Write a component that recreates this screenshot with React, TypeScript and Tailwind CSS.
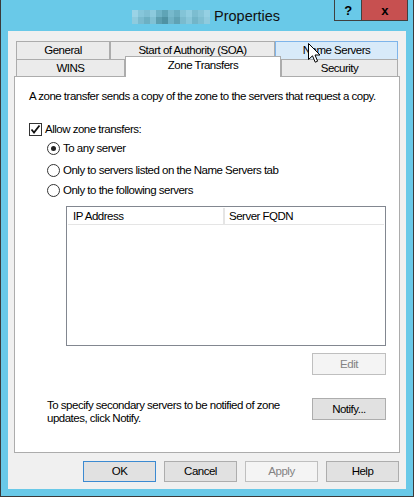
import React from "react";

const blur = [
  ["#9ad3e6", "#86c6da", "#7fbfd3", "#8ccadd", "#6fb3c6", "#5fa4b6", "#77b9cc", "#6aaec1", "#83c4d7", "#90cde0", "#7cbdd0", "#86c5d8", "#95d0e3"],
  ["#8ecbde", "#7abbcf", "#6cb0c3", "#80c1d4", "#5c9fb0", "#4f92a3", "#6fb2c5", "#5fa2b4", "#7abbce", "#88c7da", "#72b5c8", "#7ebfd2", "#8fcbde"],
];

function Tab({
  label,
  width,
  height,
  hover,
}: {
  label: string;
  width: string;
  height: string;
  hover?: boolean;
}) {
  return (
    <div
      className={`${width} ${height} flex items-center justify-center border border-b-0 ${
        hover ? "border-[#7eb4ea] bg-[#d8eaf9]" : "border-[#acacac] bg-[#ebebeb]"
      }`}
    >
      {label}
    </div>
  );
}

function Btn({
  label,
  className,
}: {
  label: string;
  className?: string;
}) {
  return (
    <div
      className={`flex h-[21px] w-[73px] items-center justify-center border ${
        className ?? "border-[#adadad] bg-[#e1e1e1]"
      }`}
    >
      {label}
    </div>
  );
}

function Radio({ checked, label }: { checked?: boolean; label: string }) {
  return (
    <div className="flex h-[15px] items-center">
      <div className="ml-[18px] flex h-[13px] w-[13px] items-center justify-center rounded-full border border-[#333] bg-white">
        {checked && <div className="h-[5px] w-[5px] rounded-full bg-[#222]" />}
      </div>
      <span className="ml-[3px]">{label}</span>
    </div>
  );
}

export default function App() {
  return (
    <div
      className="relative h-[497px] w-[414px] overflow-hidden border-x border-b border-[#3a3a3a] bg-[#69c9e8] text-[11.5px] leading-[15px] tracking-[-0.5px] text-black"
      style={{ fontFamily: '"Liberation Sans", Arial, sans-serif' }}
    >
      {/* title bar */}
      <div className="relative flex h-[31px] items-start">
        <div className="absolute left-[131px] top-[10px] grid grid-cols-[repeat(13,6px)] grid-rows-[repeat(2,7px)]">
          {blur.flat().map((c, i) => (
            <div key={i} style={{ backgroundColor: c }} />
          ))}
        </div>
        <div className="absolute left-[213px] top-[6px] text-[14.5px] leading-[20px] tracking-normal text-[#111]">
          Properties
        </div>
        <div className="ml-auto mr-[5px] flex h-[21px] border border-t-0 border-[#404040]">
          <div className="flex w-[27px] items-center justify-center border-r border-[#404040] text-[13px] font-bold">
            ?
          </div>
          <div className="flex w-[45px] items-center justify-center bg-[#c75050] text-[13px] font-bold">
            x
          </div>
        </div>
      </div>

      {/* body */}
      <div className="mx-[7px] flex h-[458px] flex-col bg-[#f0f0f0] pt-[10px]">
        <div className="ml-[8px] flex">
          <Tab label="General" width="w-[94px]" height="h-[18px]" />
          <Tab label="Start of Authority (SOA)" width="w-[165px]" height="h-[18px]" />
          <Tab label="Name Servers" width="w-[123px]" height="h-[18px]" hover />
        </div>
        <div className="relative z-10 ml-[8px] flex items-end">
          <Tab label="WINS" width="w-[109px]" height="h-[17px]" />
          <div className="-mb-px -mt-[3px] flex h-[21px] w-[156px] items-start justify-center border border-b-0 border-[#acacac] bg-white pt-[1px]">
            Zone Transfers
          </div>
          <Tab label="Security" width="w-[117px]" height="h-[17px]" />
        </div>

        <div className="ml-[6px] h-[377px] w-[386px] border border-[#acacac] bg-white pl-[14px] pt-[12px]">
          <div>A zone transfer sends a copy of the zone to the servers that request a copy.</div>

          <div className="mt-[18px] flex h-[15px] items-center">
            <div className="flex h-[13px] w-[13px] items-center justify-center border border-[#333] bg-white">
              <svg width="11" height="11" viewBox="0 0 11 11">
                <path d="M1.5 5.5 L4 8.5 L9.5 1.5" fill="none" stroke="#111" strokeWidth="1.8" />
              </svg>
            </div>
            <span className="ml-[3px]">Allow zone transfers:</span>
          </div>

          <div className="mt-[4px]">
            <Radio checked label="To any server" />
          </div>
          <div className="mt-[7px]">
            <Radio label="Only to servers listed on the Name Servers tab" />
          </div>
          <div className="mt-[5px]">
            <Radio label="Only to the following servers" />
          </div>

          <div className="ml-[37px] mt-[8px] h-[140px] w-[320px] border border-[#828790] p-px">
            <div className="flex h-[17px] border-b border-[#e5e5e5]">
              <div className="w-[157px] border-r-2 border-[#e5e5e5] pl-[5px] leading-[16px]">IP Address</div>
              <div className="pl-[4px] leading-[16px]">Server FQDN</div>
            </div>
          </div>

          <div className="ml-[283px] mt-[7px] flex h-[22px] w-[74px] items-center justify-center border border-[#bfbfbf] bg-[#f4f4f4] text-[#838383]">
            Edit
          </div>

          <div className="mt-[23px] flex items-start">
            <div className="ml-[18px] w-[250px] pt-[1px] leading-[13px]">
              To specify secondary servers to be notified of zone updates, click Notify.
            </div>
            <div className="ml-[15px] flex h-[22px] w-[74px] items-center justify-center border border-[#adadad] bg-[#e1e1e1]">
              Notify...
            </div>
          </div>
        </div>

        <div className="ml-[75px] mt-[8px] flex gap-[8px]">
          <Btn label="OK" className="border-[#3c8ad1] bg-[#e1e1e1]" />
          <Btn label="Cancel" />
          <Btn label="Apply" className="border-[#bfbfbf] bg-[#f4f4f4] text-[#838383]" />
          <Btn label="Help" />
        </div>
      </div>

      {/* mouse cursor */}
      <svg className="absolute left-[307px] top-[43px] z-20" width="13" height="21" viewBox="0 0 13 21">
        <path
          d="M0.5 0.5 L0.5 16.5 L4.5 12.8 L7.2 19.2 L9.6 18.2 L7 12 L12 12 Z"
          fill="#fff"
          stroke="#000"
          strokeWidth="1"
          strokeLinejoin="miter"
        />
      </svg>
    </div>
  );
}
